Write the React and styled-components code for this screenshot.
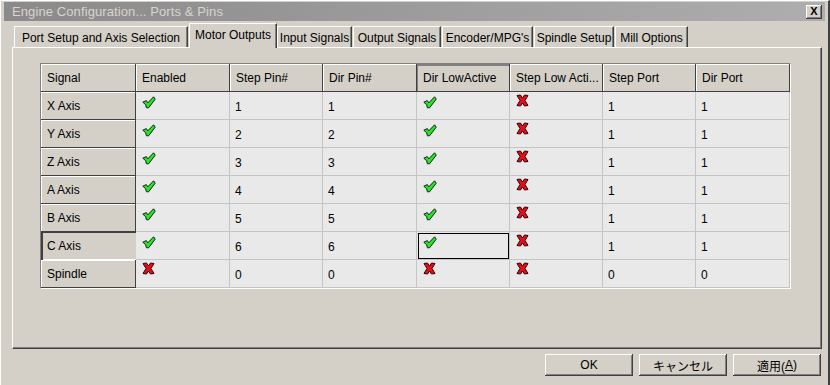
import React from "react";
import styled, { createGlobalStyle } from "styled-components";

const GlobalStyle = createGlobalStyle`
  html, body {
    margin: 0;
    padding: 0;
    background: #d4d0c8;
  }
  body {
    font-family: "Liberation Sans", "Noto Sans CJK JP", sans-serif;
    font-size: 12px;
    color: #000;
  }
`;

const columns = [
  "Signal",
  "Enabled",
  "Step Pin#",
  "Dir Pin#",
  "Dir LowActive",
  "Step Low Acti...",
  "Step Port",
  "Dir Port",
];
const colWidths = [95, 94, 93, 94, 93, 93, 93, 94];

// values: true = check, false = cross, other = text
const rows = [
  ["X Axis", true, "1", "1", true, false, "1", "1"],
  ["Y Axis", true, "2", "2", true, false, "1", "1"],
  ["Z Axis", true, "3", "3", true, false, "1", "1"],
  ["A Axis", true, "4", "4", true, false, "1", "1"],
  ["B Axis", true, "5", "5", true, false, "1", "1"],
  ["C Axis", true, "6", "6", true, false, "1", "1"],
  ["Spindle", false, "0", "0", false, false, "0", "0"],
];

const tabs = [
  { label: "Port Setup and Axis Selection", width: 174 },
  { label: "Motor Outputs", width: 88, active: true },
  { label: "Input Signals", width: 75 },
  { label: "Output Signals", width: 88 },
  { label: "Encoder/MPG's", width: 91 },
  { label: "Spindle Setup", width: 80 },
  { label: "Mill Options", width: 73 },
];

function CheckIcon() {
  return (
    <svg width="14" height="13" viewBox="0 0 14 13">
      <path
        d="M0.8 6.2 L4.3 4.6 L5.8 6.8 L11.6 0.8 L13.2 3.2 L6.6 11.8 L4.4 11.8 L3.6 8.6 Z"
        fill="#2ee02e"
        stroke="#0a2a0a"
        strokeWidth="1"
        strokeLinejoin="round"
      />
    </svg>
  );
}

function CrossIcon() {
  return (
    <svg width="13" height="13" viewBox="0 0 13 13">
      <path
        d="M1 1.5 L4.5 1 L6.5 4 L8.5 1 L12 1.5 L9 6.5 L12 11.5 L8.5 12 L6.5 9 L4.5 12 L1 11.5 L4 6.5 Z"
        fill="#e0101a"
        stroke="#3a0000"
        strokeWidth="1"
        strokeLinejoin="round"
      />
    </svg>
  );
}

export default function App() {
  return (
    <>
      <GlobalStyle />
      <Window>
        <TitleBar>
          <TitleText>Engine Configuration... Ports &amp; Pins</TitleText>
          <CloseButton>X</CloseButton>
        </TitleBar>

        <TabStrip>
          {tabs.map((t) => (
            <Tab key={t.label} $active={t.active} style={{ width: t.width }}>
              {t.label}
            </Tab>
          ))}
        </TabStrip>

        <Panel>
          <Grid>
            {columns.map((c, i) => (
              <HeaderCell key={c} $pressed={i === 4}>
                {c}
              </HeaderCell>
            ))}
            {rows.map((r, ri) =>
              r.map((v, ci) => {
                if (ci === 0) {
                  return (
                    <RowHeader key={ri + "-" + ci} $current={ri === 5}>
                      {v}
                    </RowHeader>
                  );
                }
                return (
                  <DataCell key={ri + "-" + ci} $focused={ri === 5 && ci === 4}>
                    {v === true ? (
                      <IconSlot $check><CheckIcon /></IconSlot>
                    ) : v === false ? (
                      <IconSlot><CrossIcon /></IconSlot>
                    ) : (
                      <CellText>{v}</CellText>
                    )}
                  </DataCell>
                );
              })
            )}
          </Grid>
        </Panel>

        <ButtonRow>
          <DialogButton>OK</DialogButton>
          <DialogButton>キャンセル</DialogButton>
          <DialogButton>
            適用(<u>A</u>)
          </DialogButton>
        </ButtonRow>
      </Window>
    </>
  );
}

const Window = styled.div`
  width: 830px;
  height: 385px;
  box-sizing: border-box;
  padding: 1px 3px 0 3px;
  background: #d4d0c8;
  border-top: 1px solid #ffffff;
  border-left: 1px solid #ffffff;
  border-right: 2px solid #404040;
  display: flex;
  flex-direction: column;
  overflow: hidden;
`;

const TitleBar = styled.div`
  height: 19px;
  background: linear-gradient(to right, #8a8a8a, #aeaeae);
  display: flex;
  align-items: center;
  justify-content: space-between;
  padding: 0 3px 0 8px;
`;

const TitleText = styled.span`
  color: #d8d4cc;
  font-size: 13px;
  letter-spacing: 0.1px;
`;

const CloseButton = styled.div`
  width: 16px;
  height: 14px;
  background: #d4d0c8;
  box-shadow: inset -1px -1px #404040, inset 1px 1px #ffffff,
    inset -2px -2px #808080;
  font-weight: bold;
  font-size: 11px;
  display: flex;
  align-items: center;
  justify-content: center;
  line-height: 1;
`;

const TabStrip = styled.div`
  height: 26px;
  display: flex;
  align-items: flex-end;
  margin-left: 10px;
  position: relative;
  z-index: 1;
`;

const Tab = styled.div`
  box-sizing: border-box;
  height: ${(p) => (p.$active ? "25px" : "21px")};
  margin-bottom: ${(p) => (p.$active ? "-1px" : "0")};
  padding-top: ${(p) => (p.$active ? "0" : "2px")};
  padding-bottom: ${(p) => (p.$active ? "3px" : "0")};
  background: #d4d0c8;
  border-top: 1px solid #ffffff;
  border-left: 1px solid #ffffff;
  border-right: 1px solid #404040;
  box-shadow: inset -1px 0 #808080;
  display: flex;
  align-items: center;
  justify-content: center;
  white-space: nowrap;
  font-size: 12px;
  margin-right: ${(p) => (p.$active ? "0" : "1px")};
`;

const Panel = styled.div`
  box-sizing: border-box;
  margin-left: 8px;
  width: 810px;
  height: 302px;
  border-top: 1px solid #ffffff;
  border-left: 1px solid #ffffff;
  border-right: 1px solid #404040;
  border-bottom: 1px solid #404040;
  box-shadow: inset -1px -1px #808080;
  padding: 15px 0 0 27px;
`;

const Grid = styled.div`
  display: grid;
  grid-template-columns: ${colWidths.map((w) => w + "px").join(" ")};
  grid-auto-rows: 28px;
  width: max-content;
  border-top: 1px solid #808080;
  border-left: 1px solid #808080;
  border-right: 1px solid #ffffff;
  border-bottom: 1px solid #ffffff;
  background: #e9e9e9;
`;

const HeaderCell = styled.div`
  box-sizing: border-box;
  background: #d4d0c8;
  box-shadow: ${(p) =>
    p.$pressed
      ? "inset -1px -1px #404040, inset 1px 2px #808080"
      : "inset -1px -1px #404040, inset 1px 1px #ffffff"};
  display: flex;
  align-items: center;
  padding: 0 6px;
  white-space: nowrap;
  overflow: hidden;
`;

const RowHeader = styled(HeaderCell)`
  box-shadow: ${(p) =>
    p.$current
      ? "inset 2px 1px #404040, inset 0 -1px #ffffff"
      : "inset -1px -1px #404040, inset 1px 1px #ffffff"};
`;

const DataCell = styled.div`
  box-sizing: border-box;
  background: #e9e9e9;
  border-right: 1px solid #c4c4c4;
  border-bottom: 1px solid #c4c4c4;
  display: flex;
  align-items: flex-start;
  padding: 0 5px;
  position: relative;
  outline: ${(p) => (p.$focused ? "1px solid #000" : "none")};
  outline-offset: -2px;
`;

const IconSlot = styled.div`
  margin-top: ${(p) => (p.$check ? "4px" : "2px")};
  margin-left: 1px;
  display: flex;
`;

const CellText = styled.span`
  margin-top: 8px;
`;

const ButtonRow = styled.div`
  display: flex;
  justify-content: flex-end;
  gap: 6px;
  margin-top: 5px;
  padding-right: 4px;
`;

const DialogButton = styled.div`
  box-sizing: border-box;
  width: 88px;
  height: 22px;
  background: #d4d0c8;
  box-shadow: inset -1px -1px #404040, inset 1px 1px #ffffff,
    inset -2px -2px #808080;
  display: flex;
  align-items: center;
  justify-content: center;
  font-size: 12px;
`;
